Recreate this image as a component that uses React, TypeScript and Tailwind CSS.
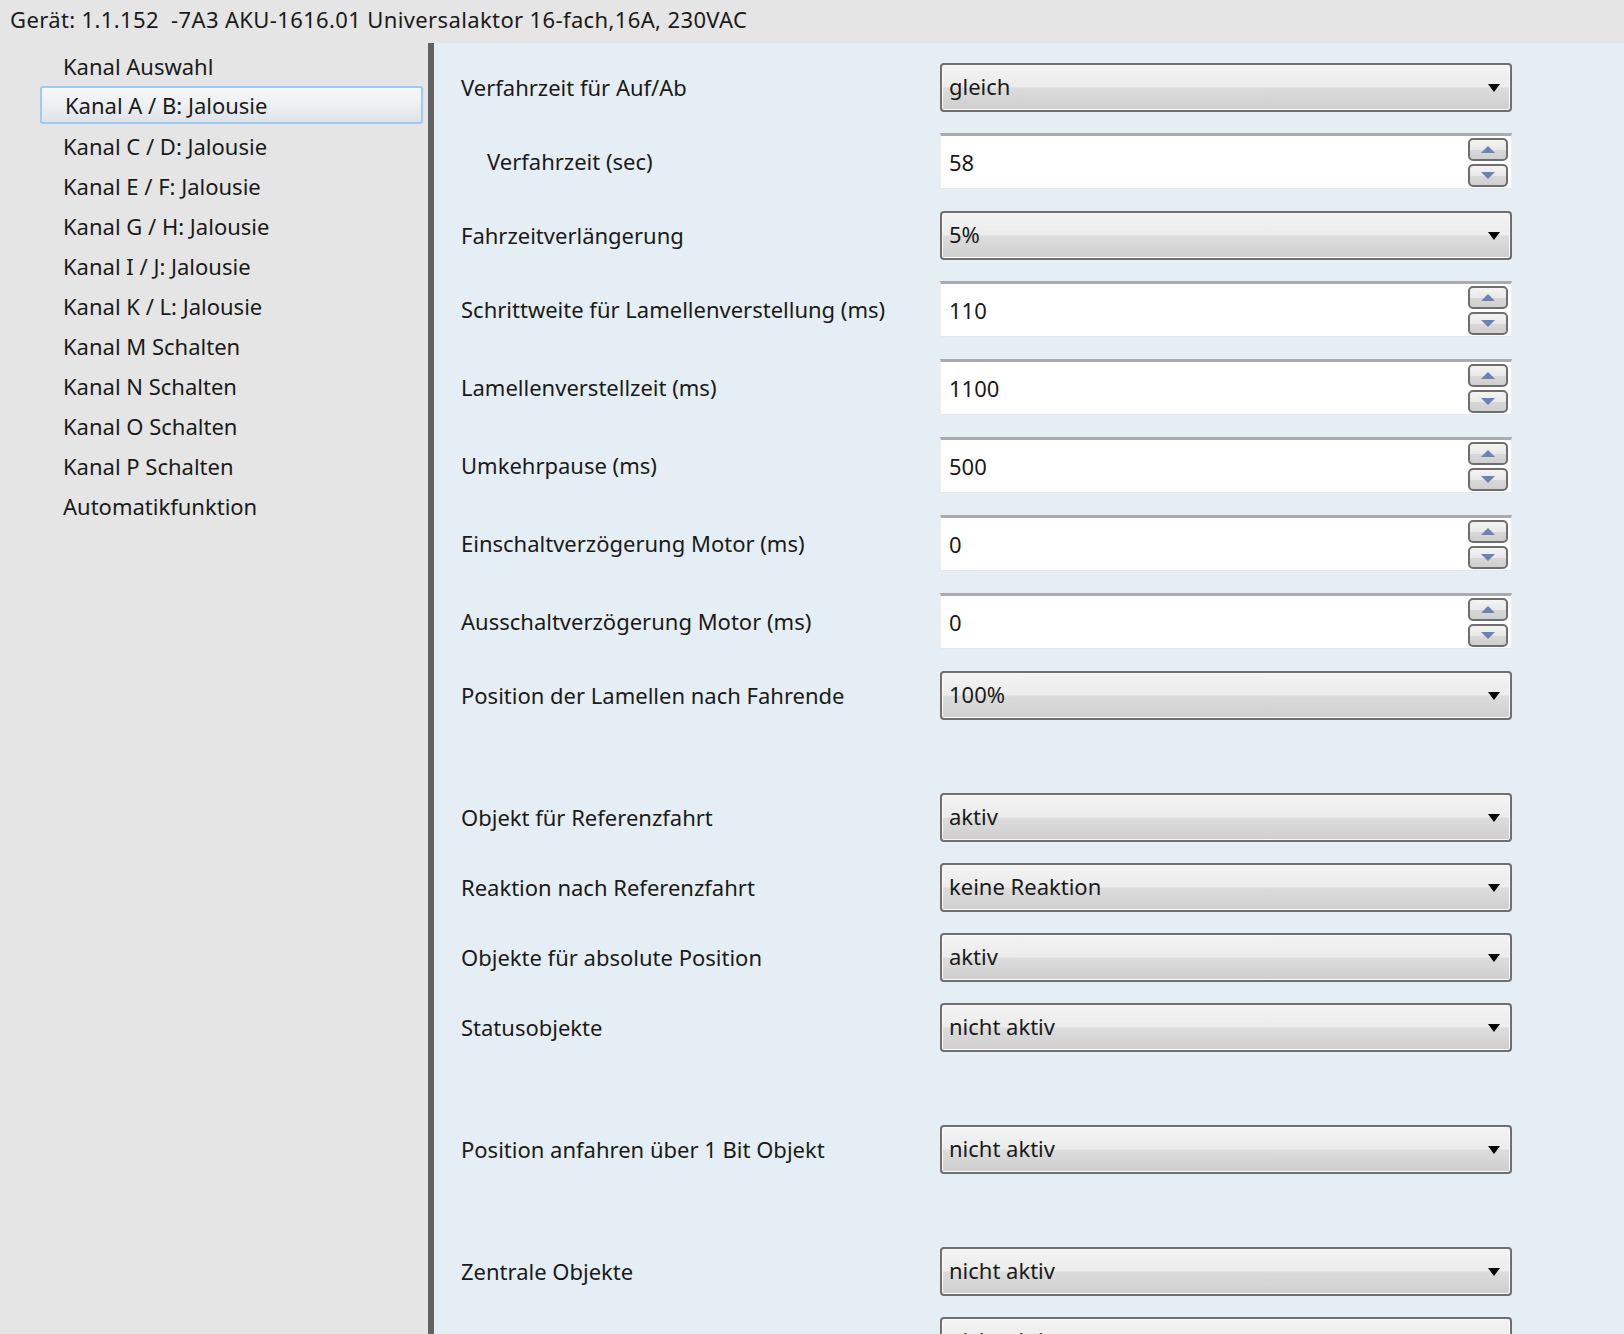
import React from "react";

type Row =
  | { kind: "dd"; label: string; value: string; indent?: boolean }
  | { kind: "sb"; label: string; value: string; indent?: boolean }
  | { kind: "gap" };

const rows: Row[] = [
  { kind: "dd", label: "Verfahrzeit für Auf/Ab", value: "gleich" },
  { kind: "sb", label: "Verfahrzeit (sec)", value: "58", indent: true },
  { kind: "dd", label: "Fahrzeitverlängerung", value: "5%" },
  { kind: "sb", label: "Schrittweite für Lamellenverstellung (ms)", value: "110" },
  { kind: "sb", label: "Lamellenverstellzeit (ms)", value: "1100" },
  { kind: "sb", label: "Umkehrpause (ms)", value: "500" },
  { kind: "sb", label: "Einschaltverzögerung Motor (ms)", value: "0" },
  { kind: "sb", label: "Ausschaltverzögerung Motor (ms)", value: "0" },
  { kind: "dd", label: "Position der Lamellen nach Fahrende", value: "100%" },
  { kind: "gap" },
  { kind: "dd", label: "Objekt für Referenzfahrt", value: "aktiv" },
  { kind: "dd", label: "Reaktion nach Referenzfahrt", value: "keine Reaktion" },
  { kind: "dd", label: "Objekte für absolute Position", value: "aktiv" },
  { kind: "dd", label: "Statusobjekte", value: "nicht aktiv" },
  { kind: "gap" },
  { kind: "dd", label: "Position anfahren über 1 Bit Objekt", value: "nicht aktiv" },
  { kind: "gap" },
  { kind: "dd", label: "Zentrale Objekte", value: "nicht aktiv" },
  { kind: "dd", label: "", value: "nicht aktiv" },
];

const sideItems = [
  "Kanal Auswahl",
  "Kanal A / B: Jalousie",
  "Kanal C / D: Jalousie",
  "Kanal E / F: Jalousie",
  "Kanal G / H: Jalousie",
  "Kanal I / J: Jalousie",
  "Kanal K / L: Jalousie",
  "Kanal M Schalten",
  "Kanal N Schalten",
  "Kanal O Schalten",
  "Kanal P Schalten",
  "Automatikfunktion",
];

function Dropdown({ value }: { value: string }) {
  return (
    <div className="w-[572px] h-[49px] rounded-[4px] border-2 border-[#6f6f6f] bg-[linear-gradient(#f3f3f3,#ececec_48%,#dcdcdc_52%,#cecece)] shadow-[inset_0_0_0_1px_#fafafa] flex items-center justify-between pl-[7px] pr-[10px]">
      <span className="pb-[3px] leading-none">{value}</span>
      <svg width="12" height="8" viewBox="0 0 12 8" className="mt-[1px]">
        <path d="M0 0 L12 0 L6 8 Z" fill="#000" />
      </svg>
    </div>
  );
}

function SpinBtn({ up }: { up?: boolean }) {
  return (
    <div className="w-[40px] h-[23px] rounded-[5px] border-2 border-[#6e6e6e] bg-[linear-gradient(#f4f4f4,#e8e8e8_50%,#d8d8d8_55%,#cfcfcf)] flex items-center justify-center">
      <svg width="14" height="7" viewBox="0 0 14 7">
        {up ? (
          <path d="M0 7 L14 7 L7 0 Z" fill="#6e80b8" />
        ) : (
          <path d="M0 0 L14 0 L7 7 Z" fill="#6e80b8" />
        )}
      </svg>
    </div>
  );
}

function Spinbox({ value }: { value: string }) {
  return (
    <div className="w-[572px] h-[56px] bg-white border-t-[3px] border-t-[#a9abae] border-x border-b border-x-[#eceff2] border-b-[#e4e8ec] flex items-center justify-between pl-[8px] pr-[3px]">
      <span className="leading-none">{value}</span>
      <div className="flex flex-col gap-[3px] pt-px">
        <SpinBtn up />
        <SpinBtn />
      </div>
    </div>
  );
}

export default function App() {
  return (
    <div className="w-[1624px] h-[1334px] overflow-hidden flex flex-col bg-[#e5e5e5] font-['Noto_Sans',sans-serif] text-[22px] text-[#1a1a1a]">
      <div className="h-[43px] shrink-0 flex items-center pl-[10px] pb-[4px] whitespace-pre tracking-[0.37px]">
        Gerät: 1.1.152  -7A3 AKU-1616.01 Universalaktor 16-fach,16A, 230VAC
      </div>
      <div className="flex flex-1 min-h-0">
        <div className="w-[428px] shrink-0 pt-[3px] flex flex-col">
          {sideItems.map((s, i) =>
            i === 1 ? (
              <div
                key={s}
                className="h-[38px] mb-[2px] ml-[40px] mr-[5px] rounded-[3px] border-2 border-[#9dcbf4] bg-[linear-gradient(#f7f7f8,#eef0f2_45%,#dfe2e7)] flex items-center pl-[23px]"
              >
                {s}
              </div>
            ) : (
              <div key={s} className="h-[40px] flex items-center pl-[63px]">
                {s}
              </div>
            )
          )}
        </div>
        <div className="w-[6px] shrink-0 bg-[#626262]" />
        <div className="flex-1 bg-[#e6eef5] pt-[20px] pl-[27px] flex flex-col">
          {rows.map((r, i) => {
            if (r.kind === "gap") return <div key={i} className="h-[52px] shrink-0" />;
            const isDd = r.kind === "dd";
            return (
              <div
                key={i}
                className={
                  isDd
                    ? "h-[49px] mb-[21px] shrink-0 flex items-center"
                    : "h-[56px] mb-[22px] shrink-0 flex items-center"
                }
              >
                <div className={r.indent ? "w-[479px] pl-[26px]" : "w-[479px]"}>{r.label}</div>
                {isDd ? <Dropdown value={r.value} /> : <Spinbox value={r.value} />}
              </div>
            );
          })}
        </div>
      </div>
    </div>
  );
}
